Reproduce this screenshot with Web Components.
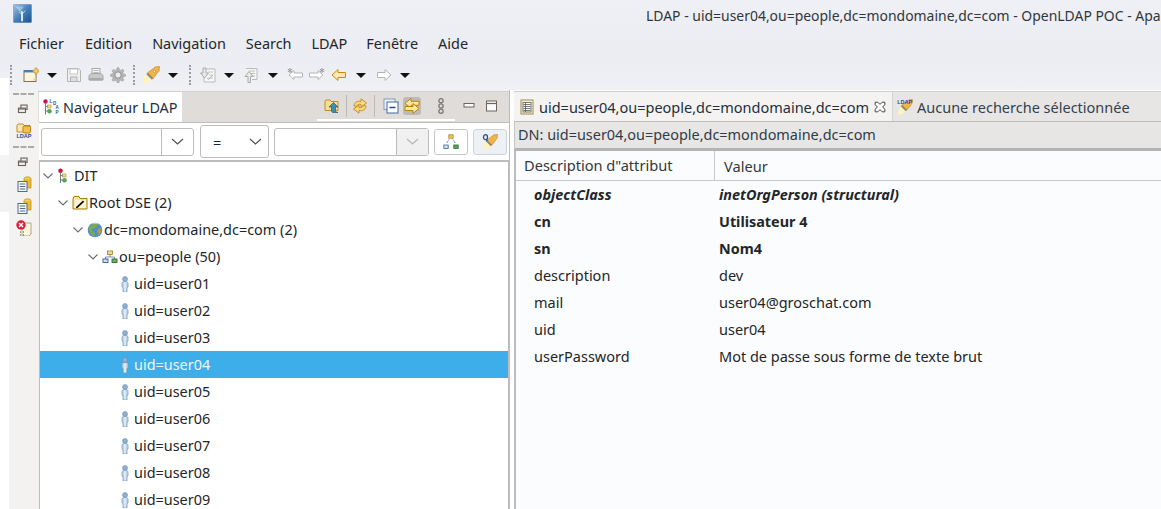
<!DOCTYPE html>
<html lang="fr">
<head>
<meta charset="utf-8">
<title>LDAP</title>
<style>
  html, body { margin: 0; height: 100%; overflow: hidden; background: #fff; }
  body { font: 14.5px "Noto Sans", sans-serif; color: #232629; }
  studio-window { width: 1161px; height: 509px; }
</style>
</head>
<body>
<studio-window></studio-window>

<script>
const TINY = `font-family="Liberation Sans" font-weight="700" fill="#1f4f96"`;

// Shared pencil: glow, grey collar, orange body
const PENCIL = `<path d="M3.800 7.200l5 5C6 14.500 3 15.500 1 15.500 1 13 2 10 3.800 7.200z" fill="#fff4ba"/><path d="M5 6l7-5.200 3.500-.3-.3 3.500L10 11z" fill="#f0b549" stroke="#c8861c" stroke-width=".6"/><path d="M3.800 7.200L5 6l5 5-1.200 1.200z" fill="#8d8378"/>`;

// Icons are all drawn on a 16x16 box
const ICONS = {
  logo: `<defs><linearGradient id="lg" x1="0" y1="0" x2="1" y2="1"><stop offset="0" stop-color="#a9c6de"/><stop offset=".5" stop-color="#4480ba"/><stop offset="1" stop-color="#174f93"/></linearGradient></defs>
    <rect x=".3" y=".3" width="15.4" height="15.4" rx="1" fill="url(#lg)" stroke="#6d95bb" stroke-width=".5"/>
    <path d="M2 2h7L6 7z" fill="#d6e4f0" opacity=".45"/><path d="M7.6 14.500V6" stroke="#e6eef6" stroke-width="1.600"/><path d="M7.600 9L5 6.500M7.600 8.500L10.500 5.500" stroke="#dbe7f2" stroke-width=".8" opacity=".8"/>`,
  newwin: `<rect x="1" y="3.5" width="12" height="11" fill="#fdf6dc" stroke="#7d7456"/><rect x="1" y="3" width="12" height="2.4" fill="#3f80c4"/><path d="M8 13.5C11 13 12.5 10 12.5 7v6.5z" fill="#efdc9c"/><path d="M10 3h2V1h2v2h2v2h-2v2h-2V5h-2z" fill="#f7d56b" stroke="#b98a1e" stroke-width=".6"/>`,
  save: `<path d="M1.5 1.5h11l2 2v11h-13z" fill="#f0f0f0" stroke="#b4b4b4"/><rect x="4" y="2" width="7.5" height="5" fill="#fff" stroke="#c4c4c4"/><rect x="4.5" y="10" width="6.5" height="4.5" fill="#ddd" stroke="#b4b4b4"/>`,
  print: `<rect x="4" y="1.5" width="8" height="6" fill="#f4f4f4" stroke="#aaa"/><path d="M5.5 3.5h5M5.5 5.5h5" stroke="#bbb"/><path d="M1 8.500l2-2h10l2 2V13H1z" fill="#c9c9c9" stroke="#a4a4a4"/><rect x="1.5" y="11" width="13" height="2.5" fill="#aaa"/>`,
  gear: `<path d="M7 .8h2l.4 2 1.400.6 1.800-1.100 1.400 1.400-1.100 1.800.6 1.400 2 .4v2l-2 .4-.6 1.400 1.100 1.800-1.400 1.400-1.800-1.100-1.400.6-.4 2H7l-.4-2-1.400-.6-1.800 1.100-1.400-1.400 1.100-1.800-.6-1.400-2-.4v-2l2-.4.6-1.400-1.100-1.800 1.400-1.400 1.800 1.100 1.400-.6z" fill="#b5b5b5" stroke="#999" stroke-width=".5"/><circle cx="8" cy="8" r="3.2" fill="#ececec" stroke="#8c8c8c"/>`,
  pen: `${PENCIL}<circle cx="11" cy="4.800" r="1" fill="#fff" stroke="#b07a20" stroke-width=".5"/>`,
  importdoc: `<path d="M6 2h9v13H4V9" fill="#f7f7f7" stroke="#bbb"/><path d="M8 5h5M9 8h4M8 11h5" stroke="#c4c4c4"/><path d="M3 1h3v5h2.500L4.500 11 .5 6H3z" fill="#e9e9e9" stroke="#aaa"/><path d="M7 11l1.500 1.500L13 8" fill="none" stroke="#b5b5b5"/>`,
  exportdoc: `<path d="M3 1.500h11v11H9" fill="#f5f5f5" stroke="#bbb"/><path d="M6 4h6M7 6.500h5M8 9h4" stroke="#bfbfbf"/><path d="M5 15.500v-6H2L6 4.500l4 5H7.500v6z" fill="#e9e9e9" stroke="#aaa"/>`,
  backstar: `<path d="M7 3.500V6h8.500v4H7v2.500L2 8z" fill="#fff" stroke="#b4b4b4"/><path d="M3 1v5M.8 2.200l4.400 2.600M5.200 2.200L.8 4.800" stroke="#9a9a9a"/>`,
  fwdstar: `<path d="M9 3.500V6H.5v4H9v2.500L14 8z" fill="#fff" stroke="#b4b4b4"/><path d="M13 1v5M10.800 2.200l4.400 2.600M15.200 2.200l-4.400 2.600" stroke="#9a9a9a"/>`,
  back: `<path d="M7 2.500v3h7.500v5H7v3L1 8z" fill="#fde9a8" stroke="#c98a16"/>`,
  fwd: `<path d="M9 2.500v3H1.500v5H9v3L15 8z" fill="#fff" stroke="#b4b4b4"/>`,
  nav: `<circle cx="3.500" cy="2.800" r="2.300" fill="#c8174a"/><path d="M3.500 5v10M3.500 7.500H6M3.500 12H6" stroke="#6d7b8a"/><rect x="5.500" y="6" width="3.500" height="3" fill="#f3dc8a" stroke="#b18d22" stroke-width=".6"/><circle cx="7.500" cy="12.200" r="2.300" fill="#5aa35a"/>`,
  navtab: `<circle cx="2.500" cy="2.500" r="2.200" fill="#c8174a"/><path d="M2.500 4.500v11M2.500 7.500H5M2.500 12H5" stroke="#6d7b8a"/><rect x="4.500" y="6" width="3.500" height="3" fill="#f3dc8a" stroke="#b18d22" stroke-width=".6"/><circle cx="6.500" cy="12.200" r="2.300" fill="#5aa35a"/>
    <text x="6.500" y="4" font-size="4.500" ${TINY}>L</text><text x="10" y="6" font-size="4.500" ${TINY}>D</text><text x="12.500" y="10" font-size="4.500" ${TINY}>A</text><text x="12.500" y="15" font-size="4.500" ${TINY}>P</text>`,
  restore: `<rect x="4.500" y="3.500" width="7" height="5" fill="none" stroke="#6b6560" stroke-width="1.300"/><rect x="1.700" y="7" width="8" height="5" fill="#f3f2f1" stroke="#6b6560" stroke-width="1.300"/><path d="M2 8h7.500" stroke="#6b6560" stroke-width="1.300"/>`,
  ldapfolder: `<path d="M1 2.500l1-1.500h5L8 2.500h6V9H1z" fill="#fbe7a4" stroke="#b98f2c"/><rect x="7" y="3" width="7.500" height="7" rx="1.500" fill="#f2c04d" stroke="#b57d17"/><text x="8" y="14.500" text-anchor="middle" font-size="5.600" ${TINY}>LDAP</text>`,
  dbdoc: `<ellipse cx="11.500" cy="2.800" rx="3.500" ry="2" fill="#f5d24e" stroke="#b98a1e" stroke-width=".7"/><path d="M8 3v9h7V3" fill="#efb93a" stroke="#b98a1e" stroke-width=".7"/><rect x="2" y="5.500" width="9" height="10" fill="#f5f7fa" stroke="#51698a"/><path d="M3.800 8h5.500M3.800 10.500h5.500M3.800 13h5.500" stroke="#51698a"/>`,
  errdoc: `<path d="M6 3h9v11l-2 2H6z" fill="#fdf9da" stroke="#a9a692"/><circle cx="5" cy="5" r="4.700" fill="#d91e36"/><path d="M3 3l4 4M7 3l-4 4" stroke="#fff" stroke-width="1.500"/><path d="M4 12h1M7 12h1M4 15h1M7 15h1" stroke="#445"/>`,
  upfolder: `<path d="M1 3.500l1-1.500h4l1 1.500h7v9H1z" fill="#fbdc92" stroke="#b98f2c"/><path d="M9.500 4.500L14 9h-2.500v3.500c0 1.500 1 2 2.500 2H9c-1 0-1.500-1-1.500-2V9H5z" fill="#3d90b4" stroke="#1b5f84" stroke-width=".7"/>`,
  sync: `<g fill="#f8d877" stroke="#b98218" stroke-width=".8"><path d="M2 8C2 4.500 5.500 2.500 9 3.500V.8L14.500 5 9 9V6.500C7 6 5.500 6.500 4.500 8.500z"/><path d="M14 8c0 3.500-3.500 5.500-7 4.500v2.700L1.500 11 7 7v2.500c2 .5 3.500 0 4.500-2z"/></g>`,
  collapse: `<rect x="1" y="1" width="11" height="10.500" fill="#eef3f8" stroke="#7f9cbc"/><rect x="4" y="4" width="11" height="11" fill="#fff" stroke="#416b9b"/><path d="M6.500 9.500h6" stroke="#26507f" stroke-width="1.500"/>`,
  link: `<path d="M7 .3v3h8v4H7v3L1 5.300z" fill="#fde79f" stroke="#b98218"/><path d="M9 5.500v3H1v4h8v3l6-5z" fill="#fde79f" stroke="#b98218"/>`,
  dots: `<circle cx="8" cy="2.800" r="2.100" fill="none" stroke="#7a7773" stroke-width="1.300"/><circle cx="8" cy="8" r="2.100" fill="none" stroke="#7a7773" stroke-width="1.300"/><circle cx="8" cy="13.200" r="2.100" fill="none" stroke="#7a7773" stroke-width="1.300"/>`,
  min: `<rect x="2" y="5.500" width="10" height="3.500" fill="#fbfbfb" stroke="#6b6560"/>`,
  max: `<rect x="2.500" y="3" width="10" height="10" fill="#fbfbfb" stroke="#6b6560"/><path d="M2.500 5.500h10" stroke="#6b6560" stroke-width="1.200"/>`,
  tree: `<rect x="5.800" y=".8" width="4.400" height="3.400" fill="#f0c654" stroke="#a67c14" stroke-width=".7"/><rect x=".8" y="11" width="4.400" height="3.400" fill="#cfdff0" stroke="#3c66a0" stroke-width=".8"/><rect x="10.800" y="11" width="4.400" height="3.400" fill="#56a85a" stroke="#2c6b2f" stroke-width=".8"/><path d="M6 5.500L3.500 9.500M10 5.500l2.500 4" stroke="#3c66a0" stroke-dasharray="1 .6"/>`,
  searchpen: `${PENCIL}<ellipse cx="3.500" cy="3.200" rx="2" ry="2.500" fill="none" stroke="#22508f" stroke-width="1.300"/><path d="M4.500 5.500l.7 1.500" stroke="#22508f" stroke-width="1.300"/>`,
  ldappen: `${PENCIL}<text x="7.700" y="5" text-anchor="middle" font-size="5.500" ${TINY}>LDAP</text>`,
  folderpen: `<path d="M1 4l1-2.500h5L8 3.500h7V14H1z" fill="#fbe3a0" stroke="#a67c14"/><rect x="2.500" y="5" width="11.500" height="8" fill="#fdf4d3"/><path d="M4 12l7-6.500 1.300 1.200L5.500 13H4z" fill="#111"/>`,
  globe: `<circle cx="8" cy="8" r="7.300" fill="#4f90c8"/><path d="M3 4c2-2 5-2.500 7-2 1 2-1 3-2 4S5 6 5 8s3 2 3 4-2 2.500-3 1.500S3 10 2 8s0-3 1-4z" fill="#7eaa4e"/><path d="M11 7c1.500-1 3-1 3.500.5 0 2.500-1.500 4.500-3 5.500-1.500-2-1.500-4.500-.5-6z" fill="#b29a4d"/><path d="M4 2.500a7 7 0 0 1 8 0C10 1.500 6 1.500 4 2.500z" fill="#dbe9f4"/>`,
  org: `<rect x="5.500" y="2" width="5" height="3.500" fill="#f6dc89" stroke="#a67c14" stroke-width=".8"/><path d="M8 5.500V8M3.500 10V8h9v2" fill="none" stroke="#5e7897" stroke-width=".8"/><rect x="1" y="10" width="5" height="3.500" fill="#cfe0f2" stroke="#2f5c96" stroke-width=".9"/><rect x="10" y="10" width="5" height="3.500" fill="#67b26a" stroke="#2c6b2f" stroke-width=".9"/>`,
  user: `<circle cx="8" cy="3" r="2.500" fill="#8fb0d0" stroke="#6387ad" stroke-width=".5"/><path d="M5 7c0-1 1-1.500 3-1.500S11 6 11 7v4l-1 .5V16H6v-4.500L5 11z" fill="#c2d6e8" stroke="#6f93b8" stroke-width=".7"/><path d="M8 6v9.500" stroke="#f4f8fb"/>`,
  entrydoc: `<rect x="2" y="1" width="12" height="14" fill="#fbf3d8" stroke="#9a8a52"/><rect x="4" y="3.500" width="8" height="9.500" fill="#fff" stroke="#777"/><path d="M4.500 5.500h7M4.500 7.500h7M4.500 9.500h7M4.500 11.500h7M6.500 3.500V13" stroke="#555" stroke-width=".8"/>`,
  close: `<path d="M2.500 2.500h3L8 5l2.500-2.500h3v3L11 8l2.500 2.500v3h-3L8 11l-2.500 2.500h-3v-3L5 8 2.500 5.500z" fill="#fff" stroke="#3f3f3f" stroke-width="1.100"/>`
};

class UiIcon extends HTMLElement {
  connectedCallback() {
    const size = this.getAttribute('size') || 16;
    const root = this.shadowRoot || this.attachShadow({ mode: 'open' });
    root.innerHTML = `
      <style>:host { display: inline-flex; flex: none; } svg { display: block; }</style>
      <svg width="${size}" height="${size}" viewBox="0 0 16 16" aria-hidden="true">${ICONS[this.getAttribute('name')] || ''}</svg>`;
  }
}

// Little black triangle next to toolbar buttons
class DropArrow extends HTMLElement {
  constructor() {
    super();
    this.attachShadow({ mode: 'open' }).innerHTML = `
      <style>:host { display: inline-flex; flex: none; width: 10px; height: 5px; }</style>
      <svg width="10" height="5" viewBox="0 0 10 5"><path d="M0 0h10L5 5z" fill="#111"/></svg>`;
  }
}

class GripBar extends HTMLElement {
  constructor() {
    super();
    this.attachShadow({ mode: 'open' }).innerHTML = `
      <style>
        :host { display: block; flex: none; width: 2px; height: 20px; border-left: 2px dotted #9b9b9b; box-sizing: border-box; }
        :host([flat]) { width: 21px; height: 2px; border-left: 0; border-top: 2px dashed #aaa; }
      </style>`;
  }
}

class TitleBar extends HTMLElement {
  constructor() {
    super();
    this.attachShadow({ mode: 'open' }).innerHTML = `
      <style>
        :host { display: flex; height: 30px; box-sizing: border-box; padding: 4px 0 0 13px; white-space: nowrap; overflow: hidden; font-size: 13.95px; color: #31363b; }
        span { margin: 3px 0 0 614px; line-height: 18px; }
      </style>
      <ui-icon name="logo" size="19"></ui-icon>
      <span>LDAP - uid=user04,ou=people,dc=mondomaine,dc=com - OpenLDAP POC - Apa</span>`;
  }
}

class MenuBar extends HTMLElement {
  constructor() {
    super();
    const items = ['Fichier', 'Edition', 'Navigation', 'Search', 'LDAP', 'Fenêtre', 'Aide'];
    this.attachShadow({ mode: 'open' }).innerHTML = `
      <style>
        :host { display: flex; gap: 20px; height: 28px; align-items: center; padding: 0 0 2px 19px; box-sizing: border-box; font-size: 14.45px; color: #232629; }
        span:nth-child(3) { margin-left: 1px; }
        span:nth-child(7) { margin-left: -1px; }
      </style>
      ${items.map(t => `<span>${t}</span>`).join('')}`;
  }
}

class MainToolbar extends HTMLElement {
  constructor() {
    super();
    // [kind, name, left gap in px]
    const items = [
      ['grip', '', 10], ['icon', 'newwin', 11], ['drop', '', 8], ['icon', 'save', 9], ['icon', 'print', 6], ['icon', 'gear', 6],
      ['grip', '', 7], ['pen', 'pen', 7], ['drop', '', 8], ['grip', '', 11], ['icon', 'importdoc', 9], ['drop', '', 8],
      ['icon', 'exportdoc', 9], ['drop', '', 9], ['icon', 'backstar', 9], ['icon', 'fwdstar', 6], ['icon', 'back', 6],
      ['drop', '', 9], ['icon', 'fwd', 10], ['drop', '', 8]
    ];
    const html = items.map(([kind, name, gap]) => {
      const st = `style="margin-left:${gap}px"`;
      if (kind === 'grip') return `<grip-bar ${st}></grip-bar>`;
      if (kind === 'drop') return `<drop-arrow ${st}></drop-arrow>`;
      if (kind === 'pen') return `<ui-icon name="${name}" size="18" ${st}></ui-icon>`;
      return `<ui-icon name="${name}" ${st}></ui-icon>`;
    }).join('');
    this.attachShadow({ mode: 'open' }).innerHTML = `
      <style>:host { display: flex; align-items: center; height: 30px; margin-top: 2px; }</style>${html}`;
  }
}

class SideStrip extends HTMLElement {
  constructor() {
    super();
    this.attachShadow({ mode: 'open' }).innerHTML = `
      <style>
        :host { display: flex; flex-direction: column; align-items: center; width: 29px; background: #f3f2f1; box-sizing: border-box; padding-top: 3px; }
      </style>
      <grip-bar flat></grip-bar>
      <ui-icon name="restore" size="14" style="margin-top:7px"></ui-icon>
      <ui-icon name="ldapfolder" style="margin-top:7px"></ui-icon>
      <grip-bar flat style="margin-top:7px"></grip-bar>
      <ui-icon name="restore" size="14" style="margin-top:7px"></ui-icon>
      <ui-icon name="dbdoc" style="margin-top:7px"></ui-icon>
      <ui-icon name="dbdoc" style="margin-top:6px"></ui-icon>
      <ui-icon name="errdoc" style="margin-top:6px"></ui-icon>`;
  }
}

class TreeRow extends HTMLElement {
  constructor() {
    super();
    this.attachShadow({ mode: 'open' }).innerHTML = `
      <style>
        :host { display: flex; align-items: center; height: 27px; flex: none; white-space: nowrap; padding-left: calc(var(--depth, 0) * 15px + 2px); box-sizing: border-box; font-size: 14.45px; color: #232629; }
        :host([selected]) { background: #3daee9; color: #eff6fb; }
        .tw { width: 12px; height: 12px; margin-right: 3px; flex: none; }
        ui-icon { margin-right: 1px; }
      </style>
      <svg class="tw" viewBox="0 0 12 12"><path class="chev" d="M1.500 3.500L6 8l4.500-4.500" fill="none" stroke="#6a6e72" stroke-width="1.100"/></svg>
      <ui-icon></ui-icon>
      <span><slot></slot></span>`;
  }
  connectedCallback() {
    const ic = this.shadowRoot.querySelector('ui-icon');
    ic.setAttribute('name', this.getAttribute('icon'));
    ic.connectedCallback();
    if (this.hasAttribute('leaf')) this.shadowRoot.querySelector('.chev').remove();
    this.style.setProperty('--depth', this.getAttribute('depth') || 0);
  }
}

class FilterCombo extends HTMLElement {
  constructor() {
    super();
    this.attachShadow({ mode: 'open' }).innerHTML = `
      <style>
        :host { display: flex; box-sizing: border-box; height: 28px; border: 1px solid #bcbcbc; border-radius: 3px; background: #fff; flex: none; font-size: 14.5px; }
        .txt { flex: 1; min-width: 0; display: flex; align-items: center; padding-left: 12px; }
        .btn { width: 31px; border-left: 1px solid #bcbcbc; display: flex; align-items: center; justify-content: center; }
        :host([plain]) { height: 33px; }
        :host([plain]) .btn { border-left: 0; width: 26px; }
        :host([disabled]) .btn { background: #f0f0f0; }
        :host([disabled]) path { stroke: #b5b5b5; }
      </style>
      <div class="txt"><slot></slot></div>
      <div class="btn"><svg width="13" height="7" viewBox="0 0 13 7"><path d="M1 1l5.500 5L12 1" fill="none" stroke="#4c4f52" stroke-width="1.100"/></svg></div>`;
  }
}

class IconButton extends HTMLElement {
  connectedCallback() {
    const root = this.shadowRoot || this.attachShadow({ mode: 'open' });
    root.innerHTML = `
      <style>
        :host { display: flex; flex: none; width: 34px; height: 26px; box-sizing: border-box; border: 1px solid #c6c6c6; border-radius: 3px; background: #fff; align-items: center; justify-content: center; }
        :host([on]) { background: #edf0f4; border-color: #cdd3da; }
      </style>
      <ui-icon name="${this.getAttribute('icon')}"></ui-icon>`;
  }
}

class LdapNavigator extends HTMLElement {
  constructor() {
    super();
    let users = '';
    for (let i = 1; i <= 9; i++) {
      users += `<tree-row depth="4" leaf icon="user" ${i === 4 ? 'selected' : ''}>uid=user0${i}</tree-row>`;
    }
    this.attachShadow({ mode: 'open' }).innerHTML = `
      <style>
        :host { display: flex; flex-direction: column; width: 472px; flex: none; box-sizing: border-box; padding-top: 2px; border-right: 1px solid #bdbdbd; overflow: hidden; background: #f3f2f1; }
        .bar { display: flex; height: 30px; flex: none; background: #e0dcd9; border-top: 1px solid #cfcfcf; margin-top: -1px; }
        .tab { display: flex; align-items: center; gap: 3px; width: 143px; margin-left: 1px; padding-left: 4px; box-sizing: border-box; background: #fff; color: #232f3e; font-size: 14.4px; }
        .tab ui-icon { margin-right: 1px; }
        .tools { flex: 1; display: flex; align-items: center; position: relative; padding-bottom: 2px; }
        .tools::after { content: ""; position: absolute; left: 135px; bottom: 1px; width: 138px; height: 2px; background: #fff; }
        .sep { width: 1px; height: 22px; background: #bcbab7; flex: none; }
        .on { background: #bdbab7; border-radius: 3px; padding: 1px; display: flex; }
        .filter { display: flex; align-items: center; flex: none; background: #fff; border-top: 1px solid #bdbdbd; border-bottom: 2px solid #bdbdbd; margin-left: 1px; padding-left: 2px; box-sizing: border-box; height: 40px; }
        .tree { flex: 1; background: #fff; margin-left: 1px; border-left: 1px solid #bdbdbd; border-right: 1px solid #bdbdbd; display: flex; flex-direction: column; overflow: hidden; }
      </style>
      <div class="bar">
        <div class="tab"><ui-icon name="navtab"></ui-icon><span>Navigateur LDAP</span></div>
        <div class="tools">
          <ui-icon name="upfolder" style="margin-left:142px"></ui-icon>
          <span class="sep" style="margin-left:6px"></span>
          <ui-icon name="sync" style="margin-left:5px"></ui-icon>
          <span class="sep" style="margin-left:6px"></span>
          <ui-icon name="collapse" style="margin-left:8px"></ui-icon>
          <span class="on" style="margin-left:4px"><ui-icon name="link"></ui-icon></span>
          <ui-icon name="dots" style="margin-left:12px"></ui-icon>
          <ui-icon name="min" style="margin-left:13px"></ui-icon>
          <ui-icon name="max" style="margin-left:6px"></ui-icon>
        </div>
      </div>
      <div class="filter">
        <filter-combo style="width:153px"></filter-combo>
        <filter-combo plain style="width:69px;margin-left:6px">=</filter-combo>
        <filter-combo disabled style="width:155px;margin-left:5px"></filter-combo>
        <icon-button icon="tree" style="margin-left:5px"></icon-button>
        <icon-button icon="searchpen" on style="margin-left:5px"></icon-button>
      </div>
      <div class="tree">
        <tree-row depth="0" icon="nav">DIT</tree-row>
        <tree-row depth="1" icon="folderpen">Root DSE (2)</tree-row>
        <tree-row depth="2" icon="globe">dc=mondomaine,dc=com (2)</tree-row>
        <tree-row depth="3" icon="org">ou=people (50)</tree-row>
        ${users}
      </div>`;
  }
}

class AttrRow extends HTMLElement {
  constructor() {
    super();
    this.attachShadow({ mode: 'open' }).innerHTML = `
      <style>
        :host { display: flex; align-items: center; height: 27px; box-sizing: border-box; padding-bottom: 2px; white-space: nowrap; font-size: 14.5px; color: #232629; }
        :host([must]) { font-weight: 700; font-size: 14.4px; padding-bottom: 0; }
        :host([oc]) { font-weight: 700; font-style: italic; font-size: 14.4px; padding-bottom: 0; }
        .k { width: 203px; padding-left: 18px; box-sizing: border-box; flex: none; }
      </style>
      <span class="k"></span><span><slot></slot></span>`;
  }
  connectedCallback() {
    this.shadowRoot.querySelector('.k').textContent = this.getAttribute('name');
  }
}

class EntryEditor extends HTMLElement {
  constructor() {
    super();
    this.attachShadow({ mode: 'open' }).innerHTML = `
      <style>
        :host { display: flex; flex-direction: column; flex: 1; min-width: 0; overflow: hidden; background: #fbfcfe; margin-left: 4px; white-space: nowrap; font-size: 14.5px; }
        .tabs { display: flex; height: 31px; margin-top: 1px; flex: none; background: #e8e6e5; border-top: 1px solid #cfcfcf; box-sizing: border-box; border-bottom: 1px solid #bdbdbd; }
        .tab { display: flex; align-items: center; height: 29px; box-sizing: border-box; color: #232f3e; }
        .tab.active { width: 379px; background: #f4f3f2; padding-left: 5px; gap: 4px; border-right: 1px solid #d6d4d2; }
        .tab.other { padding-left: 4px; gap: 4px; color: #33414f; }
        .dn { height: 29px; flex: none; box-sizing: border-box; background: #e8e6e5; padding: 0 0 2px 3px; border-left: 1px solid #c6c6c6; border-bottom: 3px solid #b4b4b4; display: flex; align-items: center; color: #2f3b47; font-size: 14.45px; }
        .table { flex: 1; border-left: 2px solid #bdbdbd; }
        .head { display: flex; height: 30px; align-items: center; border-bottom: 1px solid #c9c9c9; box-sizing: border-box; color: #33383d; font-size: 14.6px; }
        .head span:first-child { width: 199px; padding-left: 8px; box-sizing: border-box; border-right: 1px solid #c9c9c9; line-height: 29px; flex: none; }
        .head span:last-child { padding-left: 9px; }
      </style>
      <div class="tabs">
        <div class="tab active"><ui-icon name="entrydoc"></ui-icon><span>uid=user04,ou=people,dc=mondomaine,dc=com</span><ui-icon name="close" size="14"></ui-icon></div>
        <div class="tab other"><ui-icon name="ldappen"></ui-icon><span>Aucune recherche sélectionnée</span></div>
      </div>
      <div class="dn">DN: uid=user04,ou=people,dc=mondomaine,dc=com</div>
      <div class="table">
        <div class="head"><span>Description d"attribut</span><span>Valeur</span></div>
        <attr-row oc name="objectClass">inetOrgPerson (structural)</attr-row>
        <attr-row must name="cn">Utilisateur 4</attr-row>
        <attr-row must name="sn">Nom4</attr-row>
        <attr-row name="description">dev</attr-row>
        <attr-row name="mail">user04@groschat.com</attr-row>
        <attr-row name="uid">user04</attr-row>
        <attr-row name="userPassword">Mot de passe sous forme de texte brut</attr-row>
      </div>`;
  }
}

class StudioWindow extends HTMLElement {
  constructor() {
    super();
    this.attachShadow({ mode: 'open' }).innerHTML = `
      <style>
        :host { display: flex; flex-direction: column; overflow: hidden; background: #fff; }
        .top { flex: none; height: 90px; background: linear-gradient(#fff, #fff) 0 78px / 9px 12px no-repeat, linear-gradient(#eef0f5, #ebedf2 60%, #eff1f5); }
        .main { flex: 1; display: flex; min-height: 0; }
        .gutter { width: 9px; flex: none; background: linear-gradient(#fff 65px, #f3f3f3 65px, #f3f3f3 122px, #fff 122px); }
      </style>
      <div class="top">
        <title-bar></title-bar>
        <menu-bar></menu-bar>
        <main-toolbar></main-toolbar>
      </div>
      <div class="main">
        <div class="gutter"></div>
        <side-strip></side-strip>
        <ldap-navigator></ldap-navigator>
        <entry-editor></entry-editor>
      </div>`;
  }
}

customElements.define('ui-icon', UiIcon);
customElements.define('drop-arrow', DropArrow);
customElements.define('grip-bar', GripBar);
customElements.define('title-bar', TitleBar);
customElements.define('menu-bar', MenuBar);
customElements.define('main-toolbar', MainToolbar);
customElements.define('side-strip', SideStrip);
customElements.define('tree-row', TreeRow);
customElements.define('filter-combo', FilterCombo);
customElements.define('icon-button', IconButton);
customElements.define('ldap-navigator', LdapNavigator);
customElements.define('attr-row', AttrRow);
customElements.define('entry-editor', EntryEditor);
customElements.define('studio-window', StudioWindow);
</script>
</body>
</html>
